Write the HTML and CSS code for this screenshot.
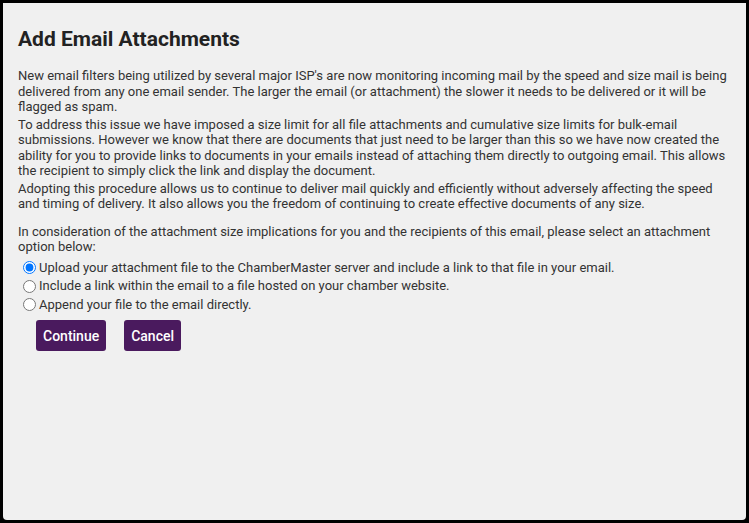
FILE: index.html
```html
<!DOCTYPE html>
<html>
<head>
<meta charset="utf-8">
<link rel="stylesheet" href="styles.css">
</head>
<body>
<div class="frame">
  <div class="dialog">
    <h1 class="title">Add Email Attachments</h1>
    <p class="para">New email filters being utilized by several major ISP's are now monitoring incoming mail by the speed and size mail is being delivered from any one email sender. The larger the email (or attachment) the slower it needs to be delivered or it will be flagged as spam.</p>
    <p class="para">To address this issue we have imposed a size limit for all file attachments and cumulative size limits for bulk-email submissions. However we know that there are documents that just need to be larger than this so we have now created the ability for you to provide links to documents in your emails instead of attaching them directly to outgoing email. This allows the recipient to simply click the link and display the document.</p>
    <p class="para">Adopting this procedure allows us to continue to deliver mail quickly and efficiently without adversely affecting the speed and timing of delivery. It also allows you the freedom of continuing to create effective documents of any size.</p>
    <p class="para intro">In consideration of the attachment size implications for you and the recipients of this email, please select an attachment option below:</p>
    <div class="options">
      <label class="option"><input type="radio" name="opt" checked>Upload your attachment file to the ChamberMaster server and include a link to that file in your email.</label>
      <label class="option"><input type="radio" name="opt">Include a link within the email to a file hosted on your chamber website.</label>
      <label class="option"><input type="radio" name="opt">Append your file to the email directly.</label>
    </div>
    <div class="actions">
      <button class="btn">Continue</button>
      <button class="btn">Cancel</button>
    </div>
  </div>
</div>
</body>
</html>
```

FILE: styles.css
```css
html, body {
  margin: 0;
  padding: 0;
  background: #000;
}
.frame {
  width: 749px;
  height: 523px;
  box-sizing: border-box;
  padding: 3px;
  background: #000;
}
.dialog {
  height: 100%;
  box-sizing: border-box;
  background: #f0f0f0;
  border-radius: 0 0 4px 4px;
  padding: 24px 15px 0 15px;
  font-family: Roboto, "Liberation Sans", sans-serif;
  color: #333;
}
.title {
  margin: 0 0 17px 0;
  font-size: 21px;
  font-weight: 700;
  line-height: 24px;
  color: #222;
}
.para {
  margin: 0 0 2px 0;
  font-size: 13px;
  line-height: 15.5px;
}
.intro {
  margin-top: 12px;
  margin-bottom: 4px;
}
.options {
  display: flex;
  flex-direction: column;
}
.option {
  display: flex;
  align-items: center;
  font-size: 13px;
  line-height: 18.5px;
  height: 18.5px;
  margin-left: 3px;
}
.option input {
  margin: 0 3px 0 2px;
  width: 13px;
  height: 13px;
}
.actions {
  display: flex;
  gap: 18px;
  margin: 6px 0 0 18px;
}
.btn {
  background: #4a1a5e;
  color: #fff;
  border: none;
  border-radius: 3px;
  font-family: Roboto, "Liberation Sans", sans-serif;
  font-size: 14px;
  font-weight: 500;
  height: 31px;
  padding: 0 7px;
}
```
